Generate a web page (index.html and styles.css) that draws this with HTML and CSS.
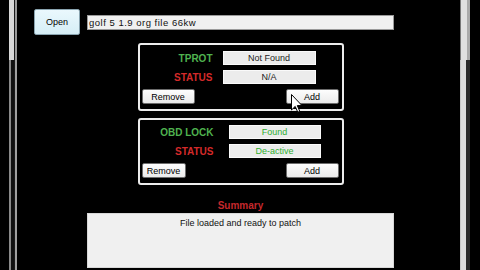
FILE: index.html
```html
<!DOCTYPE html>
<html lang="en">
<head>
    <meta charset="UTF-8">
    <meta name="viewport" content="width=device-width, initial-scale=1.0">
    <title>Immo Patcher</title>
    <link rel="stylesheet" href="styles.css">
</head>
<body>
    <div class="screen">
        <div class="edge edge-left">
            <div class="edge-top"></div>
            <div class="edge-bottom"></div>
        </div>

        <main class="app">
            <div class="toolbar">
                <button class="open-btn">Open</button>
                <div class="file-box">golf 5 1.9 org file 66kw</div>
            </div>

            <div class="column">
                <section class="panel">
                    <div class="fields">
                        <span class="label green">TPROT</span>
                        <div class="field">Not Found</div>
                        <span class="label red">STATUS</span>
                        <div class="field">N/A</div>
                    </div>
                    <div class="actions">
                        <button class="btn">Remove</button>
                        <button class="btn">Add</button>
                    </div>
                </section>

                <section class="panel panel-obd">
                    <div class="fields">
                        <span class="label green">OBD LOCK</span>
                        <div class="field ok">Found</div>
                        <span class="label red">STATUS</span>
                        <div class="field ok">De-active</div>
                    </div>
                    <div class="actions">
                        <button class="btn btn-narrow">Remove</button>
                        <button class="btn">Add</button>
                    </div>
                </section>

                <h2 class="summary-title">Summary</h2>
                <div class="summary-box">File loaded and ready to patch</div>
            </div>
        </main>

        <div class="edge edge-right">
            <div class="edge-top"></div>
            <div class="edge-bottom"></div>
        </div>

        <svg class="cursor" width="12" height="19" viewBox="0 0 12 19">
            <path d="M0.5 0.5 L0.5 16 L4.2 12.4 L6.8 18.2 L8.8 17.3 L6.3 11.6 L11 11.6 Z" fill="#fff" stroke="#000" stroke-width="1"/>
        </svg>
    </div>
</body>
</html>
```

FILE: styles.css
```css
body {
    margin: 0;
    background-color: #000;
    font-family: "Liberation Sans", Arial, sans-serif;
    color: #222;
}

.screen {
    position: relative;
    display: flex;
    height: 270px;
    overflow: hidden;
}

/* window frame on both sides */
.edge {
    display: flex;
    flex-direction: column;
}

.edge-left {
    margin-left: 9px;
    width: 8px;
}

.edge-left .edge-top {
    height: 60px;
    background: linear-gradient(to right, #d8d8d8 0 5px, #1a1a1a 5px 6px, #9a9a9a 6px 8px);
}

.edge-left .edge-bottom {
    flex: 1;
    background: linear-gradient(to right, #8a8a8a 0 2px, #111 2px 5px, #1a1a1a 5px 6px, #a0a0a0 6px 8px);
}

.edge-right {
    width: 10px;
    margin-right: 10px;
}

.edge-right .edge-top {
    height: 60px;
    background: linear-gradient(to right, #777 0 1px, #e0e0e0 1px 7px, #aaa 7px 10px);
}

.edge-right .edge-bottom {
    flex: 1;
    background: linear-gradient(to right, #c8c8c8 0 1px, #dcdcdc 1px 6px, #2a2a2a 6px 10px);
}

.app {
    flex: 1;
}

.toolbar {
    display: flex;
    align-items: center;
    padding-top: 9px;
    margin-left: 17px;
}

.open-btn {
    width: 46px;
    height: 26px;
    padding: 0;
    border: 1px solid #8aa4b0;
    border-radius: 2px;
    background: linear-gradient(#eaf8fd, #d6eef6);
    font-family: inherit;
    font-size: 9px;
    color: #000;
}

.file-box {
    width: 307px;
    height: 15px;
    margin-left: 7px;
    box-sizing: border-box;
    padding: 0 1px;
    border: 1px solid #9a9a9a;
    background-color: #f0f0f0;
    font-size: 9.5px;
    letter-spacing: 0.5px;
    line-height: 13px;
    color: #111;
}

.column {
    width: 307px;
    margin-left: 70px;
}

.panel {
    width: 206px;
    box-sizing: border-box;
    margin: 8px auto 0;
    padding: 6px 3px 5px 0;
    border: 2px solid #ececec;
    border-radius: 3px;
}

.panel-obd {
    margin-top: 7px;
    padding-top: 5px;
    padding-bottom: 5px;
}

.fields {
    display: grid;
    grid-template-columns: 73px 93px;
    column-gap: 10px;
    row-gap: 5px;
    align-items: center;
}

.panel-obd .fields {
    grid-template-columns: 74px 92px;
    column-gap: 15px;
}

.label {
    text-align: right;
    font-size: 10px;
    font-weight: bold;
}

.green {
    color: #4fb24f;
}

.red {
    color: #d42a2a;
}

.field {
    height: 14px;
    box-sizing: border-box;
    border: 1px solid #fafafa;
    background-color: #ececec;
    text-align: center;
    font-size: 9px;
    line-height: 12px;
}

.field.ok {
    color: #2fae2f;
}

.actions {
    display: flex;
    justify-content: space-between;
    margin-top: 5px;
    padding-left: 2px;
}

.btn {
    width: 53px;
    height: 15px;
    padding: 0;
    border: 1px solid #6c6c6c;
    border-radius: 2px;
    background: linear-gradient(#fdfdfd, #ebebeb);
    font-family: inherit;
    font-size: 9px;
    color: #000;
}

.btn-narrow {
    width: 44px;
}

.summary-title {
    margin: 15px 0 1px;
    text-align: center;
    font-size: 10px;
    line-height: 12px;
    color: #c4282c;
}

.summary-box {
    height: 55px;
    box-sizing: border-box;
    padding-top: 4px;
    border: 1px solid #d8d8d8;
    background-color: #f0f0f0;
    text-align: center;
    font-size: 9px;
    line-height: 11px;
    color: #111;
}

.cursor {
    position: absolute;
    left: 291px;
    top: 94px;
}
```
